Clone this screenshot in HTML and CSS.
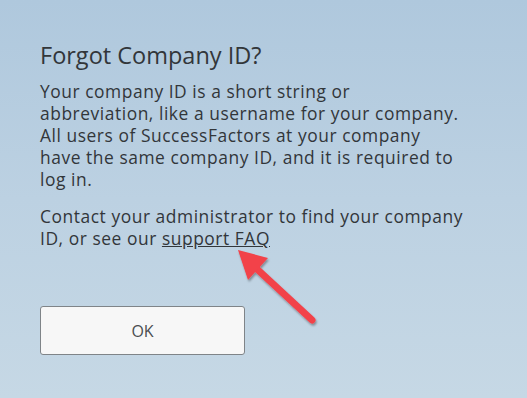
FILE: index.html
```html
<!DOCTYPE html>
<html lang="en">
<head>
  <meta charset="UTF-8" />
  <title>Forgot Company ID?</title>
  <link rel="stylesheet" href="styles.css">
</head>
<body>
  <div class="dialog">
    <h1 class="title">Forgot Company ID?</h1>
    <p class="text">Your company ID is a short string or abbreviation, like a username for your company. All users of SuccessFactors at your company have the same company ID, and it is required to log in.</p>
    <p class="text">Contact your administrator to find your company ID, or see our <a class="link" href="#">support FAQ</a></p>
    <div class="actions">
      <button class="btn" type="button">OK</button>
    </div>
  </div>

  <!-- annotation arrow -->
  <svg class="arrow" width="120" height="110" viewBox="0 0 120 110">
    <defs>
      <filter id="sh" x="-20%" y="-20%" width="140%" height="140%">
        <feDropShadow dx="1" dy="2" stdDeviation="1.2" flood-color="#000" flood-opacity="0.35"/>
      </filter>
    </defs>
    <g filter="url(#sh)">
      <line x1="90" y1="88" x2="36" y2="38" stroke="#f2424a" stroke-width="7" stroke-linecap="round"/>
      <polygon points="16,18 46,26 26,48" fill="#f2424a"/>
    </g>
  </svg>
</body>
</html>
```

FILE: styles.css
```css
html, body {
  height: 100%;
}

body {
  margin: 0;
  position: relative;
  background: linear-gradient(180deg, #afc8dd 0%, #bcd1e2 50%, #c6d8e5 100%);
  font-family: "Open Sans", "Noto Sans", sans-serif;
  color: #32363a;
  overflow: hidden;
}

.dialog {
  padding: 40px 40px 0 40px;
  width: 425px;
}

.title {
  margin: 0 0 10px 0;
  font-size: 23.5px;
  font-weight: 400;
  line-height: 30px;
}

.text {
  margin: 0 0 15px 0;
  font-size: 17.4px;
  line-height: 22px;
  letter-spacing: 0.55px;
}

.link {
  color: #32363a;
  text-decoration: underline;
}

.actions {
  padding-top: 42px;
}

.btn {
  width: 205px;
  height: 49px;
  background: #f7f7f7;
  border: 1px solid #7f8488;
  border-radius: 3px;
  font-family: inherit;
  font-size: 16px;
  color: #4a4d50;
}

.arrow {
  position: absolute;
  left: 222px;
  top: 232px;
}
```
